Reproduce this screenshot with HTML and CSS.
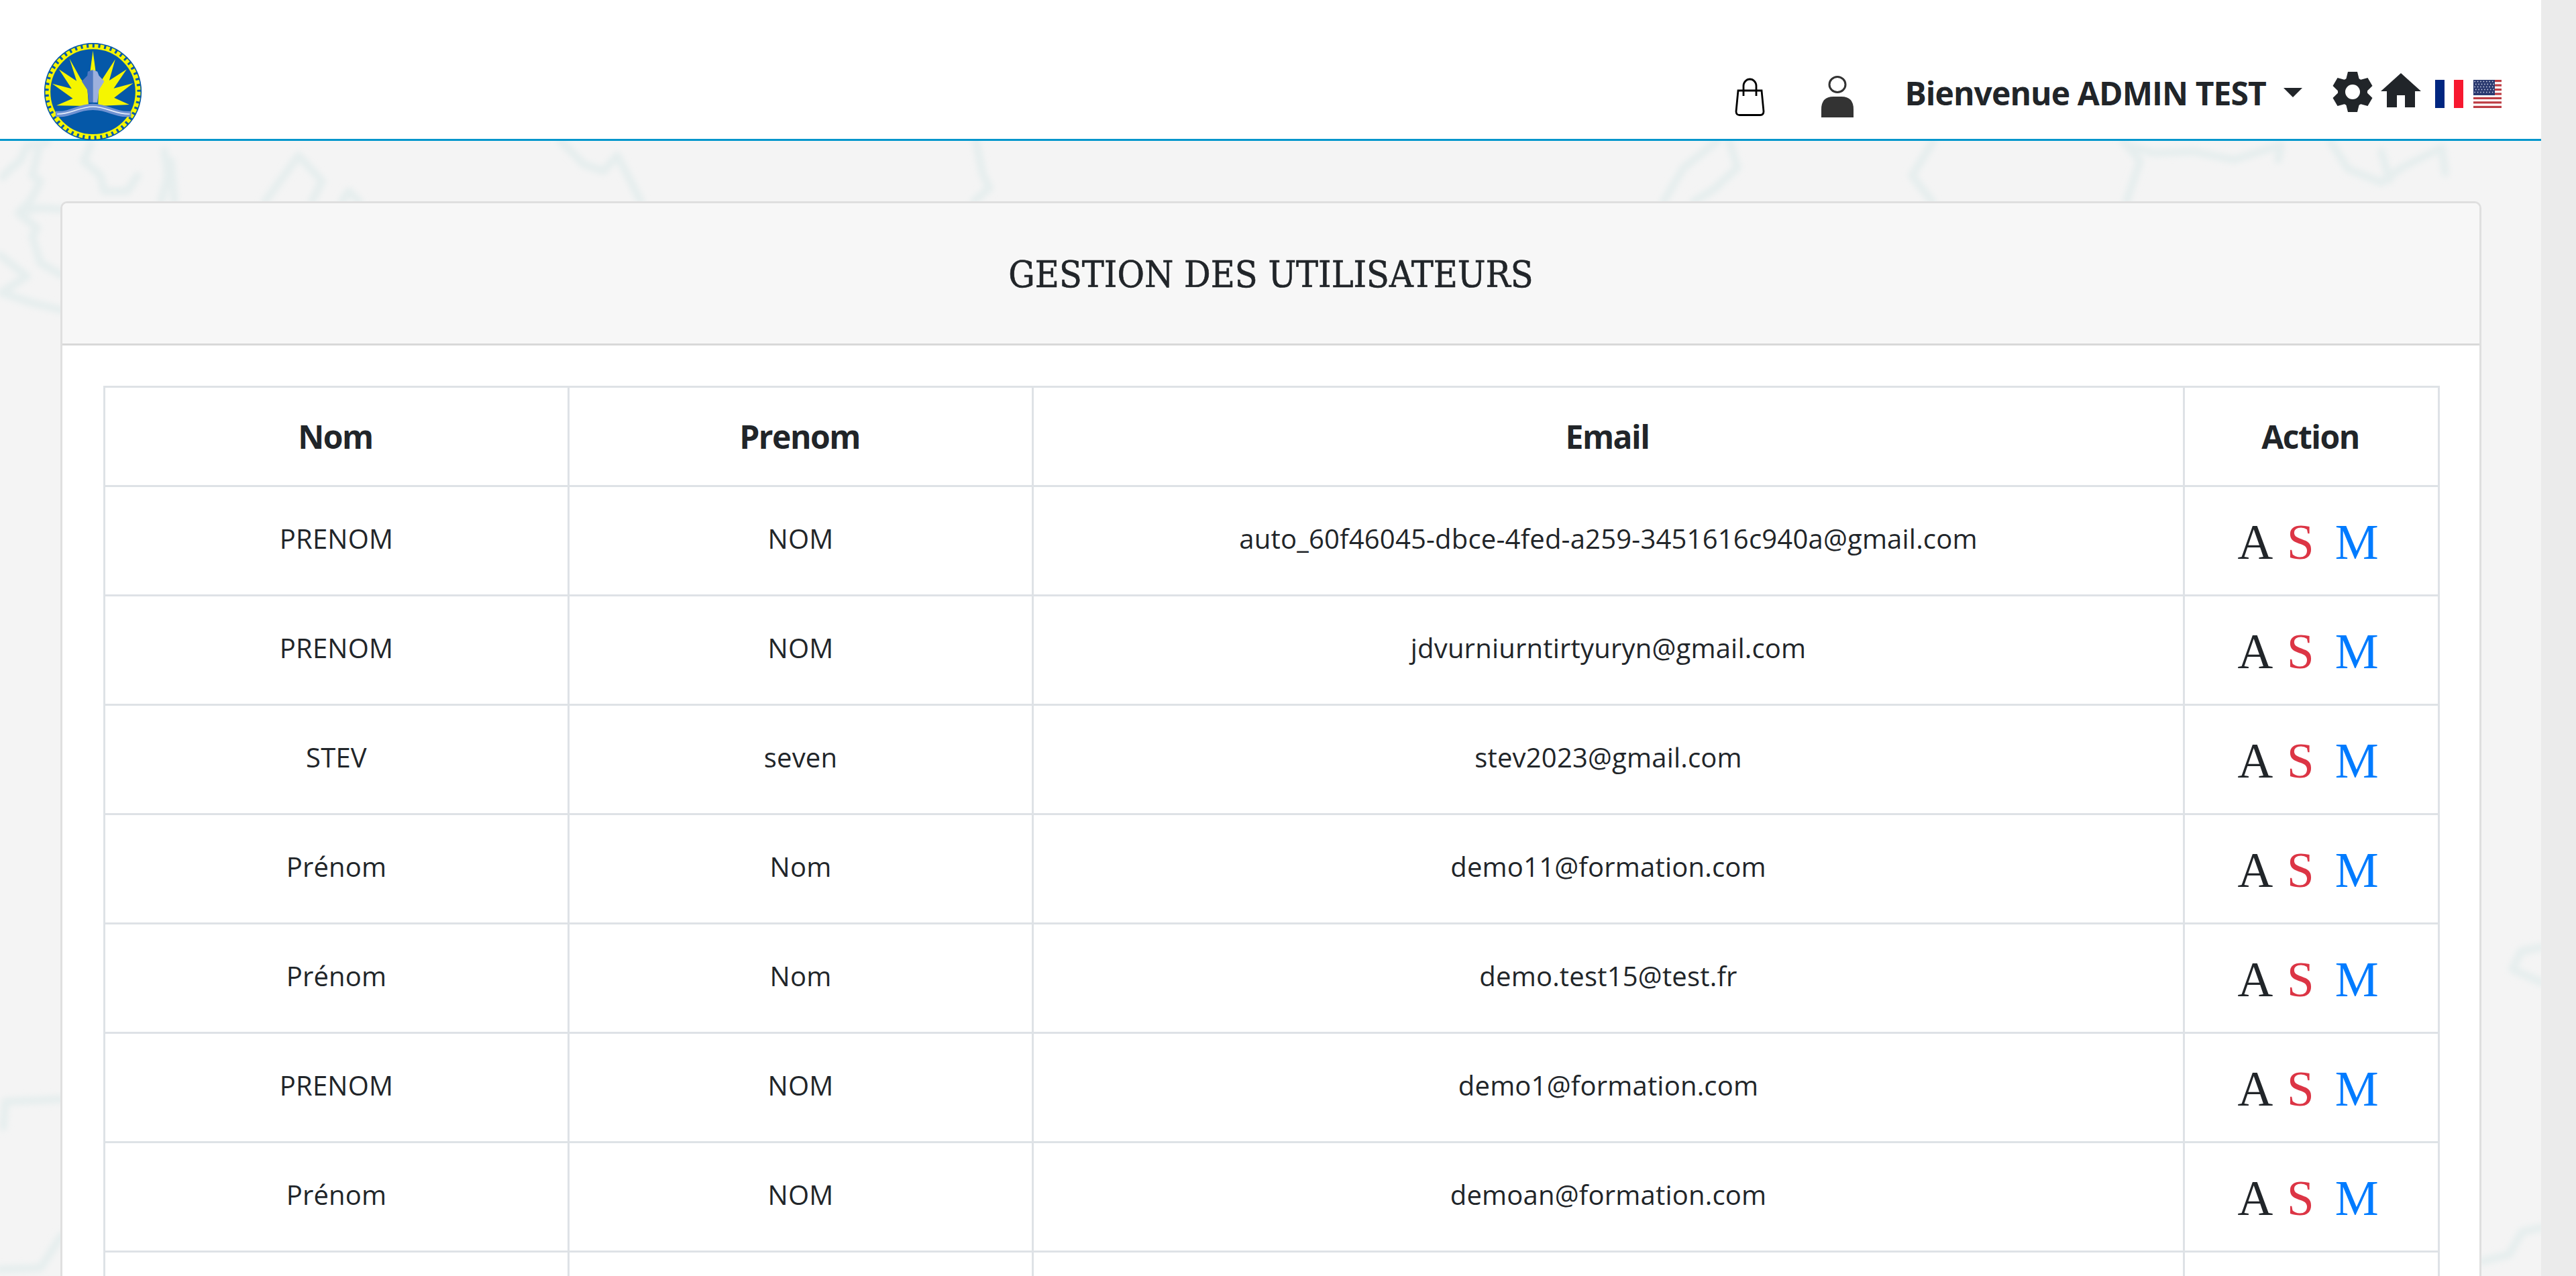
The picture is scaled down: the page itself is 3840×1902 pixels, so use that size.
FILE: index.html
```html
<!DOCTYPE html>
<html lang="fr">
<head>
    <meta charset="UTF-8">
    <title>Gestion des utilisateurs</title>
    <link rel="stylesheet" href="styles.css">
</head>
<body>
    <div class="page">
        <svg class="map-bg" viewBox="0 0 3788 1692" width="3788" height="1692" aria-hidden="true">
            <g fill="none" stroke="#e6eeee" stroke-width="12" stroke-linecap="round" stroke-linejoin="round" filter="url(#soft)" transform="translate(0,-210)">
                <path d="M70 212 L40 218 L30 240 L15 252 L4 264"/>
                <path d="M58 220 L48 262 L60 270 L45 300 L28 316 L60 310 L92 312"/>
                <path d="M28 318 L55 340 L48 352 L60 392 L92 410"/>
                <path d="M0 380 L40 412 L2 436 L50 452 L92 462"/>
                <path d="M135 215 L125 240 L150 262 L155 285 L190 285 L205 262"/>
                <path d="M245 225 L250 262 L240 300"/>
                <path d="M255 240 L260 300"/>
                <path d="M395 300 L425 260 L445 232 L480 270 L465 300"/>
                <path d="M510 300 L520 285 L535 300"/>
                <path d="M836 210 L870 245 L900 255 L920 232 L940 270 L955 300"/>
                <path d="M1455 210 L1465 260 L1475 280 L1452 300"/>
                <path d="M2560 210 L2510 250 L2480 300"/>
                <path d="M2578 210 L2590 250 L2555 282 L2525 300"/>
                <path d="M2882 210 L2850 262 L2880 300"/>
                <path d="M3165 210 L3190 240 L3170 300"/>
                <path d="M3170 216 L3210 228 L3270 226 L3330 238 L3400 216 L3396 238"/>
                <path d="M3475 212 L3500 252 L3550 272 L3580 250 L3640 220 L3645 258"/>
                <path d="M3550 226 L3562 268"/>
                <path d="M5 1680 L8 1642 L60 1640 L92 1638"/>
                <path d="M0 1892 L60 1890 L92 1842"/>
                <path d="M3788 1412 L3758 1418 L3745 1445 L3788 1464"/>
                <path d="M3700 1880 L3740 1870 L3760 1836 L3788 1830"/>
            </g>
            <defs>
                <filter id="soft"><feGaussianBlur stdDeviation="4"/></filter>
            </defs>
        </svg>

        <header class="topbar">
            <svg class="logo" viewBox="75 40 440 435" aria-label="Logo">
                <circle cx="295" cy="258" r="218" fill="#0558a8"/>
                <circle cx="295" cy="258" r="194" fill="none" stroke="#f5f500" stroke-width="8"/>
                <circle cx="295" cy="258" r="203" fill="none" stroke="#f5f500" stroke-width="20" stroke-dasharray="17 9"/>
                <polygon fill="#f5f500" points="132,320 205,288 113,222 200,245 143,158 222,210 190,110 240,200 270,240 276,322"/>
                <polygon fill="#f5f500" points="458,316 390,285 475,220 388,243 446,158 368,208 395,113 335,205 320,250 318,322"/>
                <polygon fill="#f5f500" points="295,75 307,165 283,165"/>
                <polygon fill="#5079c2" points="295,160 272,168 270,186 245,212 270,250 278,306 295,306"/>
                <polygon fill="#9db0dd" points="295,160 315,168 322,186 346,212 322,250 315,306 295,306"/>
                <path d="M128 345 C190 350 230 312 295 312 C360 312 400 350 466 345 L466 370 C400 378 360 340 295 340 C230 340 190 378 128 370 Z" fill="#6f92d2"/>
                <path d="M135 358 C195 360 235 325 295 325 C355 325 395 360 460 358" fill="none" stroke="#e8eefa" stroke-width="5"/>
            </svg>

            <svg class="icon-bag" viewBox="0 0 45 57" fill="none" stroke="#000" stroke-width="2.8">
                <path d="M5 19 H40 L43 50 Q43 55.5 38 55.5 H7 Q2 55.5 2 50 Z"/>
                <path d="M13 27 V12 A9.5 10 0 0 1 32 12 V27"/>
            </svg>
            <svg class="icon-user" viewBox="0 0 48 62">
                <ellipse cx="24" cy="13" rx="12" ry="11.5" fill="none" stroke="#333" stroke-width="3"/>
                <path d="M0 62 V50 Q0 31 18 31 H30 Q48 31 48 50 V62 Z" fill="#333"/>
            </svg>
            <span class="welcome">Bienvenue ADMIN TEST</span>
            <svg class="caret" viewBox="0 0 28 14"><polygon points="0,0 28,0 14,14" fill="#212529"/></svg>
            <svg class="icon-gear" viewBox="0 0 60 60">
                <g fill="#212529">
                    <circle cx="30" cy="30" r="22"/>
                    <polygon points="23,0 37,0 40,12 20,12"/>
                    <polygon points="23,0 37,0 40,12 20,12" transform="rotate(60 30 30)"/>
                    <polygon points="23,0 37,0 40,12 20,12" transform="rotate(120 30 30)"/>
                    <polygon points="23,0 37,0 40,12 20,12" transform="rotate(180 30 30)"/>
                    <polygon points="23,0 37,0 40,12 20,12" transform="rotate(240 30 30)"/>
                    <polygon points="23,0 37,0 40,12 20,12" transform="rotate(300 30 30)"/>
                </g>
                <circle cx="30" cy="30" r="11" fill="#fff"/>
            </svg>
            <svg class="icon-home" viewBox="0 0 60 51">
                <polygon fill="#212529" points="30,0 60,27 51,27 51,51 36,51 36,33 24,33 24,51 9,51 9,27 0,27"/>
            </svg>
            <svg class="flag flag-fr" viewBox="0 0 42 42">
                <rect width="14" height="42" fill="#002680"/>
                <rect x="14" width="14" height="42" fill="#fff"/>
                <rect x="28" width="14" height="42" fill="#f7182f"/>
            </svg>
            <svg class="flag flag-us" viewBox="0 0 42 42">
                <rect width="42" height="42" fill="#fff"/>
                <g fill="#bd3d44">
                    <rect width="42" height="3.2"/>
                    <rect y="6.5" width="42" height="3.2"/>
                    <rect y="13" width="42" height="3.2"/>
                    <rect y="19.4" width="42" height="3.2"/>
                    <rect y="25.8" width="42" height="3.2"/>
                    <rect y="32.2" width="42" height="3.2"/>
                    <rect y="38.8" width="42" height="3.2"/>
                </g>
                <rect width="32" height="23" fill="#2b3a70"/>
                <g fill="none" stroke="#dfe4f2" stroke-width="1.3" stroke-dasharray="1.4 3">
                    <path d="M1.5 2.5 H31"/>
                    <path d="M3 6.5 H31"/>
                    <path d="M1.5 10.5 H31"/>
                    <path d="M3 14.5 H31"/>
                    <path d="M1.5 18.5 H31"/>
                </g>
            </svg>
        </header>

        <main class="card">
            <div class="card-header">GESTION DES UTILISATEURS</div>
            <div class="card-body">
                <table class="users">
                    <colgroup>
                        <col class="col-name">
                        <col class="col-name">
                        <col class="col-email">
                        <col class="col-action">
                    </colgroup>
                    <thead>
                        <tr>
                            <th>Nom</th>
                            <th>Prenom</th>
                            <th>Email</th>
                            <th>Action</th>
                        </tr>
                    </thead>
                    <tbody>
                        <tr>
                            <td>PRENOM</td>
                            <td>NOM</td>
                            <td>auto_60f46045-dbce-4fed-a259-3451616c940a@gmail.com</td>
                            <td class="actions"><a class="act act-a">A</a><a class="act act-s">S</a><a class="act act-m">M</a></td>
                        </tr>
                        <tr>
                            <td>PRENOM</td>
                            <td>NOM</td>
                            <td>jdvurniurntirtyuryn@gmail.com</td>
                            <td class="actions"><a class="act act-a">A</a><a class="act act-s">S</a><a class="act act-m">M</a></td>
                        </tr>
                        <tr>
                            <td>STEV</td>
                            <td>seven</td>
                            <td>stev2023@gmail.com</td>
                            <td class="actions"><a class="act act-a">A</a><a class="act act-s">S</a><a class="act act-m">M</a></td>
                        </tr>
                        <tr>
                            <td>Prénom</td>
                            <td>Nom</td>
                            <td>demo11@formation.com</td>
                            <td class="actions"><a class="act act-a">A</a><a class="act act-s">S</a><a class="act act-m">M</a></td>
                        </tr>
                        <tr>
                            <td>Prénom</td>
                            <td>Nom</td>
                            <td>demo.test15@test.fr</td>
                            <td class="actions"><a class="act act-a">A</a><a class="act act-s">S</a><a class="act act-m">M</a></td>
                        </tr>
                        <tr>
                            <td>PRENOM</td>
                            <td>NOM</td>
                            <td>demo1@formation.com</td>
                            <td class="actions"><a class="act act-a">A</a><a class="act act-s">S</a><a class="act act-m">M</a></td>
                        </tr>
                        <tr>
                            <td>Prénom</td>
                            <td>NOM</td>
                            <td>demoan@formation.com</td>
                            <td class="actions"><a class="act act-a">A</a><a class="act act-s">S</a><a class="act act-m">M</a></td>
                        </tr>
                        <tr>
                            <td></td>
                            <td></td>
                            <td></td>
                            <td></td>
                        </tr>
                    </tbody>
                </table>
            </div>
        </main>
    </div>
    <div class="scroll-track"></div>
</body>
</html>
```

FILE: styles.css
```css
html, body {
    height: 100%;
    margin: 0;
    overflow: hidden;
}
body {
    display: flex;
    font-family: "Open Sans", "Noto Sans", sans-serif;
    color: #212529;
    background-color: #ebebeb;
}
.page {
    position: relative;
    flex: 1;
    height: 100%;
    overflow: hidden;
    background-color: #f4f4f4;
}
.scroll-track {
    width: 52px;
    background-color: #ebebeb;
}
.map-bg {
    position: absolute;
    left: 0;
    top: 210px;
}

/* barre du haut */
.topbar {
    position: relative;
    display: flex;
    align-items: flex-start;
    height: 207px;
    padding: 0 59px 0 65px;
    background-color: #fff;
    border-bottom: 3px solid #0096cc;
}
.logo {
    width: 147px;
    height: 145px;
    margin-top: 64px;
    margin-right: auto;
}
.icon-bag {
    width: 45px;
    height: 57px;
    margin-top: 116px;
}
.icon-user {
    width: 48px;
    height: 62px;
    margin-top: 113px;
    margin-left: 84px;
}
.welcome {
    margin-top: 106px;
    margin-left: 76px;
    font-size: 48px;
    line-height: 66px;
    font-weight: 700;
    letter-spacing: -0.9px;
    white-space: nowrap;
}
.caret {
    width: 28px;
    height: 14px;
    margin-top: 131px;
    margin-left: 26px;
}
.icon-gear {
    width: 60px;
    height: 60px;
    margin-top: 107px;
    margin-left: 45px;
}
.icon-home {
    width: 60px;
    height: 51px;
    margin-top: 109px;
    margin-left: 12px;
}
.flag {
    width: 42px;
    height: 42px;
    margin-top: 119px;
}
.flag-fr {
    margin-left: 21px;
}
.flag-us {
    margin-left: 15px;
}

/* carte */
.card {
    position: relative;
    margin: 90px 89px 0 90px;
    background-color: #fff;
    border: 3px solid #dfdfdf;
    border-radius: 10px;
}
.card-header {
    height: 209px;
    line-height: 212px;
    text-align: center;
    background-color: #f7f7f7;
    border-bottom: 3px solid #d8d8d8;
    border-radius: 8px 8px 0 0;
    font-family: "DejaVu Serif Condensed", "DejaVu Serif", serif;
    font-size: 55px;
    font-stretch: condensed;
    -webkit-text-stroke: 0.6px #212529;
}
.card-body {
    padding: 60px 58px 0 61px;
}

/* tableau */
.users {
    border-collapse: collapse;
    table-layout: fixed;
    width: 3483px;
}
.col-name {
    width: 692px;
}
.col-email {
    width: 1716px;
}
.col-action {
    width: 380px;
}
.users th, .users td {
    box-sizing: border-box;
    border: 3px solid #dee2e6;
    text-align: center;
    vertical-align: middle;
    padding: 0;
}
.users th {
    height: 148px;
    padding-right: 3px;
    font-size: 48px;
    font-weight: 700;
    letter-spacing: -1.5px;
}
.users td {
    height: 163px;
    padding-bottom: 7px;
    font-size: 40px;
    letter-spacing: 0.2px;
    line-height: 60px;
}
.users td.actions {
    padding: 5px 10px 0 0;
    font-family: "Liberation Serif", serif;
    font-size: 73px;
    letter-spacing: 0;
}
.act-a {
    color: #212529;
}
.act-s {
    color: #dc3545;
    margin-left: 21px;
}
.act-m {
    color: #007bff;
    margin-left: 31px;
}
```
